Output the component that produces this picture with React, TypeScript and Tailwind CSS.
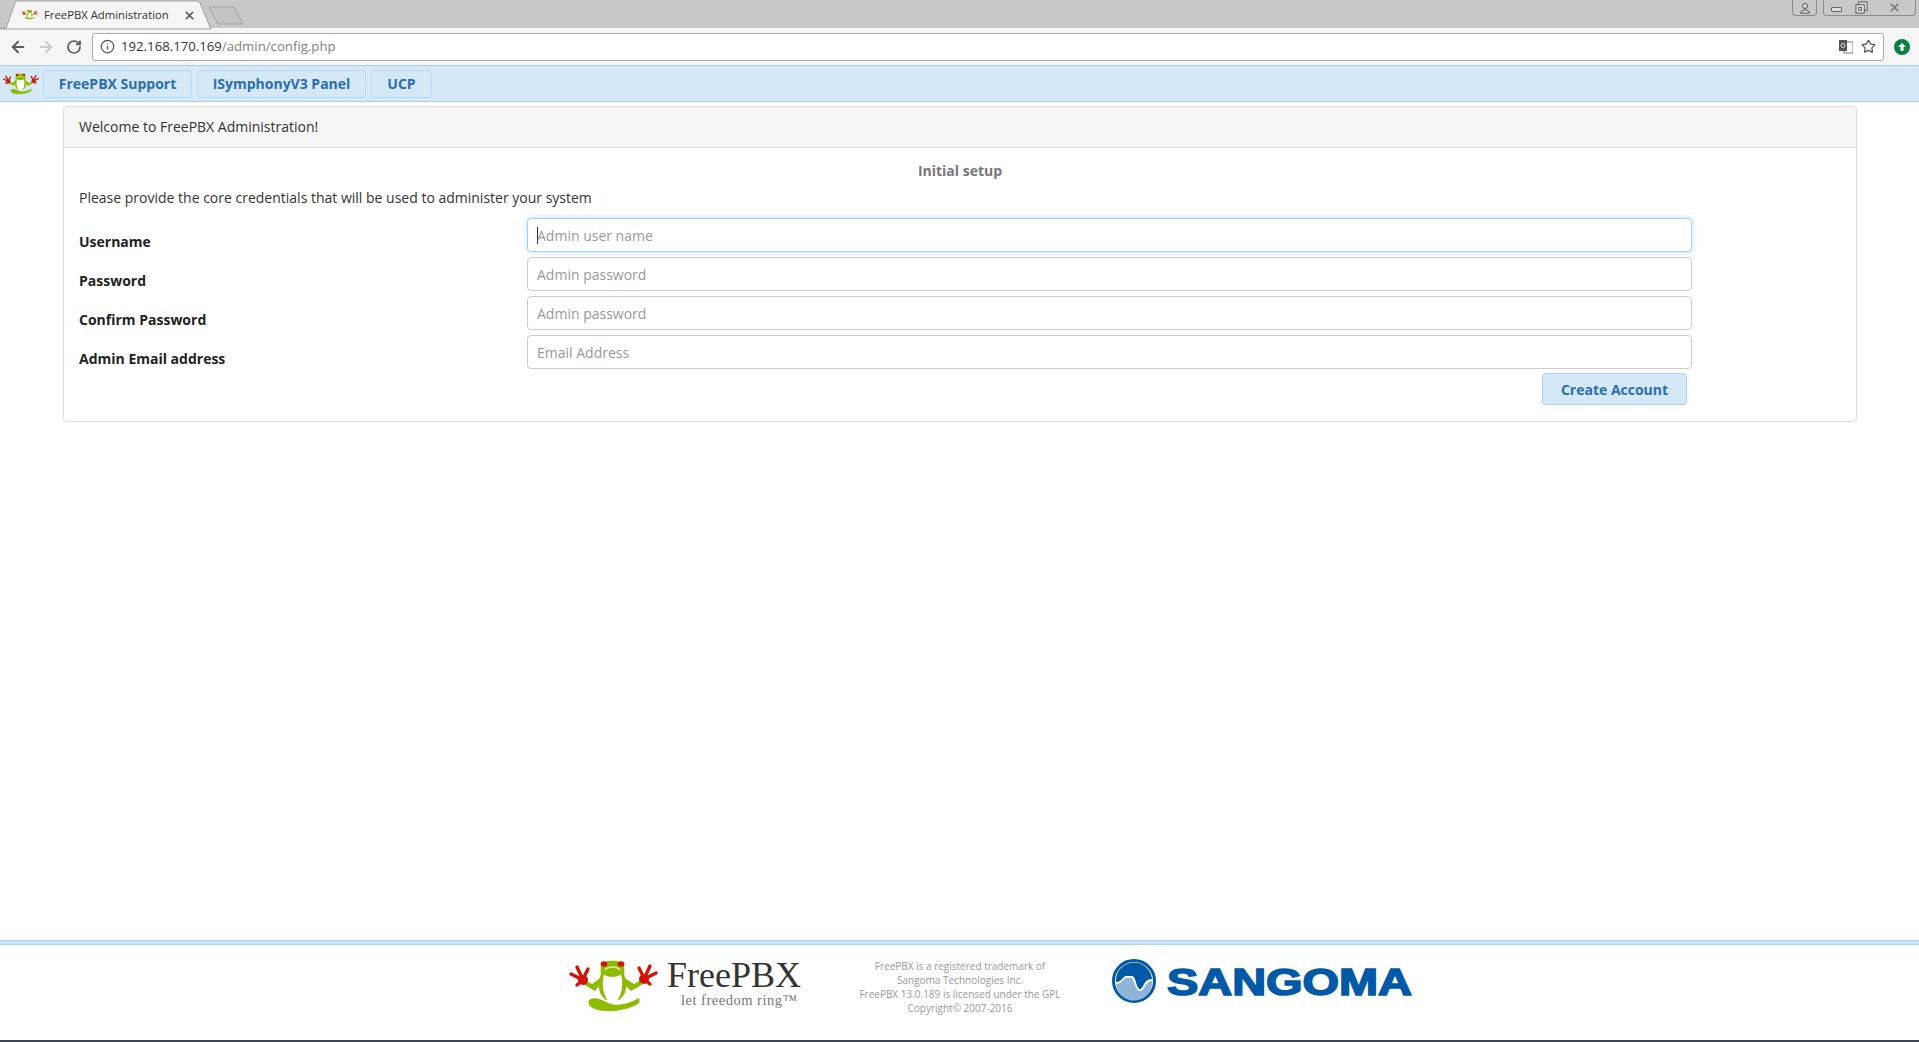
import { ArrowLeft, ArrowRight, Info, RotateCw, Star, X } from "lucide-react";

const font = { fontFamily: '"Open Sans", sans-serif' };

function Hand() {
  return (
    <g stroke="#d01505" strokeWidth="3.4" strokeLinecap="round" fill="#d01505">
      <circle cx="23" cy="30" r="5" stroke="none" />
      <path d="M23 30 L11 24 M23 30 L17 17 M23 29 L28 19 M22 31 L17 35" fill="none" />
    </g>
  );
}

function Frog({ className }: { className: string }) {
  return (
    <svg viewBox="0 0 110 70" className={className}>
      <path
        d="M41 16 C42 9 63 9 64 16 C65 21 63 25 66 29 L74 34 L81 30 L83 34 L71 41 L66 36 C66 42 64 46 59 50 L46 50 C41 46 39 42 39 36 L35 41 L23 34 L25 30 L32 34 L39 29 C42 25 40 21 41 16 Z"
        fill="#8dbb00"
      />
      <path
        d="M44 24 C47 28 58 28 61 24 C63 32 63 43 57 51 H48 C42 43 42 32 44 24 Z"
        fill="#fff"
      />
      <path d="M45 20 C48 16 57 16 60 20" fill="none" stroke="#dcebaa" strokeWidth="1.5" />
      <path
        d="M29 50 C35 46 42 50 48 53 C58 57 68 54 79 48 C80 50 80 52 78 54 C68 60 50 63 38 60 C31 58 27 55 29 50 Z"
        fill="#8dbb00"
      />
      <ellipse cx="44" cy="14" rx="3.4" ry="2.8" fill="#d01505" />
      <ellipse cx="61" cy="14" rx="3.4" ry="2.8" fill="#d01505" />
      <Hand />
      <g transform="matrix(-1 0 0 1 107 -1)">
        <Hand />
      </g>
    </svg>
  );
}

function Sangoma() {
  return (
    <svg viewBox="0 0 302 44" className="h-[44px] w-[302px]">
      <circle cx="22" cy="22" r="20.5" fill="#fff" stroke="#0059a6" strokeWidth="3" />
      <path d="M4 23 C10 23 11 17 14 17 H20 C24 17 24 30 28 30 C32 30 31 20 40 20 A18 18 0 0 0 4 23 Z" fill="#0059a6" />
      <path d="M4 25 C10 25 12 19 14 19 H19 C22 19 23 32 28 32 C33 32 33 22 40 22 A18 18 0 0 1 4 25 Z" fill="#8fb4da" />
      <text
        x="55"
        y="36"
        textLength="245"
        lengthAdjust="spacingAndGlyphs"
        fontFamily='"Liberation Sans", sans-serif'
        fontWeight="700"
        fontSize="37"
        fill="#0059a6"
        stroke="#0059a6"
        strokeWidth="1.6"
      >
        SANGOMA
      </text>
    </svg>
  );
}

function Field({ label, placeholder, focused }: { label: string; placeholder: string; focused?: boolean }) {
  return (
    <div className="flex h-[34px] gap-0">
      <label className="w-[448px] pt-[14px] text-[14px] leading-[20px] font-bold text-[#222]">{label}</label>
      <div
        className={`flex w-[1165px] h-[34px] items-center rounded-[4px] border bg-white px-[9px] text-[14px] text-[#999] ${
          focused ? "border-[#a9d0ee] shadow-[0_0_6px_#bcdcf5]" : "border-[#ccc]"
        }`}
      >
        {focused && <span className="mr-[-1px] h-[17px] w-px bg-[#333]" />}
        {placeholder}
      </div>
    </div>
  );
}

function NavButton({ children, className }: { children: string; className: string }) {
  return (
    <a
      className={`flex h-[28px] items-center justify-center rounded-[4px] border border-[#b8daf5] text-[14px] font-bold text-[#2a6eb0] ${className}`}
    >
      {children}
    </a>
  );
}

export default function App() {
  return (
    <div className="flex h-[1042px] flex-col overflow-hidden bg-white" style={font}>
      {/* window title strip */}
      <div className="relative flex h-[28px] shrink-0 bg-[#c8c8c8]">
        <svg className="absolute top-0 left-0 h-[30px] w-[250px]" viewBox="0 0 250 30">
          <path d="M0 28 L6 28 L15 3 C16 1 17 1 19 1 H196 C198 1 199 2 200 3 L211 29 L0 29 Z" fill="#f5f5f5" stroke="#a0a0a0" />
          <path d="M209 7 H234 L243 24 H218 Z" fill="#c4c4c4" stroke="#a3a3a3" strokeLinejoin="round" />
        </svg>
        <div className="relative flex h-[28px] w-[198px] items-center pl-[20px]">
          <Frog className="h-[13px] w-[20px]" />
          <span className="ml-[4px] mt-[2px] text-[11.3px] text-[#333]">FreePBX Administration</span>
          <X size={13} strokeWidth={3} className="absolute left-[183px] top-[9px] text-[#555]" />
        </div>
        <div className="ml-auto mr-[3px] flex h-[16px] items-stretch gap-[6px]">
          <div className="flex w-[25px] items-center justify-center rounded-b-[4px] border border-t-0 border-[#8c8c8c]">
            <svg viewBox="0 0 12 12" className="h-[12px] w-[12px]">
              <circle cx="6" cy="4" r="2.5" fill="#ddd" stroke="#555" />
              <path d="M1.5 11 C2 7 10 7 10.5 11 Z" fill="#ddd" stroke="#555" />
            </svg>
          </div>
          <div className="flex w-[93px] rounded-b-[4px] border border-t-0 border-[#8c8c8c]">
            <div className="flex w-[25px] items-center justify-center">
              <span className="mt-[3px] h-[5px] w-[11px] rounded-[1px] border border-[#666] bg-[#ddd]" />
            </div>
            <div className="flex w-[25px] items-center justify-center">
              <svg viewBox="0 0 14 14" className="h-[13px] w-[13px]">
                <rect x="4" y="1" width="9" height="9" fill="#ddd" stroke="#555" />
                <rect x="1" y="4" width="9" height="9" fill="#ddd" stroke="#555" />
                <rect x="4" y="7" width="3" height="3" fill="none" stroke="#555" />
              </svg>
            </div>
            <div className="flex flex-1 items-center justify-center">
              <X size={13} strokeWidth={3} className="text-[#777]" />
            </div>
          </div>
        </div>
      </div>

      {/* browser toolbar */}
      <div className="flex h-[37px] shrink-0 items-center bg-[#f5f5f5] pl-[9px]">
        <ArrowLeft size={18} strokeWidth={2.6} className="text-[#5a5a5a]" />
        <ArrowRight size={18} strokeWidth={2.6} className="ml-[10px] text-[#c9c9c9]" />
        <RotateCw size={16} strokeWidth={2.6} className="ml-[11px] text-[#5a5a5a]" />
        <div className="ml-[10px] flex h-[28px] w-[1792px] items-center rounded-[3px] border border-[#a9a9a9] bg-white pl-[7px] text-[13.2px]">
          <Info size={15} strokeWidth={2} className="text-[#555]" />
          <span className="ml-[6px] text-[#333]">192.168.170.169</span>
          <span className="text-[#808080]">/admin/config.php</span>
          <div className="ml-auto mr-[7px] flex items-center gap-[8px]">
            <svg viewBox="0 0 14 14" className="h-[14px] w-[14px]">
              <rect x="5" y="2" width="9" height="11" fill="#fff" stroke="#777" />
              <rect x="0" y="0" width="8" height="11" fill="#555" />
              <circle cx="4" cy="5.5" r="2" fill="none" stroke="#ddd" />
            </svg>
            <Star size={15} strokeWidth={2} className="text-[#555]" />
          </div>
        </div>
        <div className="ml-[10px] flex h-[16px] w-[16px] items-center justify-center rounded-full bg-[#0b8043]">
          <svg viewBox="0 0 10 10" className="h-[10px] w-[10px]">
            <path d="M5 1 L9 5 H6.5 V9 H3.5 V5 H1 Z" fill="#fff" />
          </svg>
        </div>
      </div>

      {/* page nav */}
      <div className="flex h-[37px] shrink-0 items-center border-y border-[#a9cdec] bg-[#d5e8f8]">
        <Frog className="ml-[-1px] h-[29px] w-[45px]" />
        <div className="ml-[-1px] flex gap-[5px]">
          <NavButton className="w-[149px]">FreePBX Support</NavButton>
          <NavButton className="w-[169px]">ISymphonyV3 Panel</NavButton>
          <NavButton className="w-[61px]">UCP</NavButton>
        </div>
      </div>

      {/* setup panel */}
      <main className="flex-1 px-[63px] pt-[4px]">
        <div className="h-[316px] w-[1794px] rounded-[4px] border border-[#ddd]">
          <div className="flex h-[41px] items-center border-b border-[#ddd] bg-[#f5f5f5] px-[15px] pb-[2px] text-[14px] text-[#333]">
            Welcome to FreePBX Administration!
          </div>
          <div className="px-[15px] pt-[13px]">
            <div className="text-center text-[14px] leading-[20px] font-bold text-[#777]">Initial setup</div>
            <p className="mt-[7px] text-[14px] leading-[20px] text-[#333]">
              Please provide the core credentials that will be used to administer your system
            </p>
            <div className="mt-[10px] flex flex-col gap-[5px]">
              <Field label="Username" placeholder="Admin user name" focused />
              <Field label="Password" placeholder="Admin password" />
              <Field label="Confirm Password" placeholder="Admin password" />
              <Field label="Admin Email address" placeholder="Email Address" />
            </div>
            <div className="mt-[4px] flex w-[1608px] justify-end">
              <button className="h-[32px] w-[145px] rounded-[4px] border border-[#a9d0f0] bg-[#d5e8f8] text-[14px] font-bold text-[#2a6eb0]">
                Create Account
              </button>
            </div>
          </div>
        </div>
      </main>

      {/* footer */}
      <footer className="h-[102px] shrink-0 border-b-2 border-b-[#3c4650]">
        <div className="h-[5px] border-y border-[#aad4f2] bg-[#cde5f8]" />
        <div className="flex items-start pt-[5px] pl-[560px]">
          <Frog className="h-[70px] w-[110px] shrink-0" />
          <div className="ml-[-3px] flex w-[140px] flex-col" style={{ fontFamily: '"Liberation Serif", serif' }}>
            <span className="mt-[9px] text-[36px] leading-[32px] text-[#333]">FreePBX</span>
            <span className="ml-[14px] mt-[1px] text-[14.5px] leading-[16px] tracking-[0.5px] text-[#777]">let freedom ring™</span>
          </div>
          <div className="ml-[42px] mt-[9px] w-[222px] text-center text-[10px] leading-[14px] text-[#999]">
            <div>FreePBX is a registered trademark of</div>
            <div>Sangoma Technologies Inc.</div>
            <div>FreePBX 13.0.189 is licensed under the GPL</div>
            <div>Copyright© 2007-2016</div>
          </div>
          <div className="ml-[41px] mt-[9px]">
            <Sangoma />
          </div>
        </div>
      </footer>
    </div>
  );
}
